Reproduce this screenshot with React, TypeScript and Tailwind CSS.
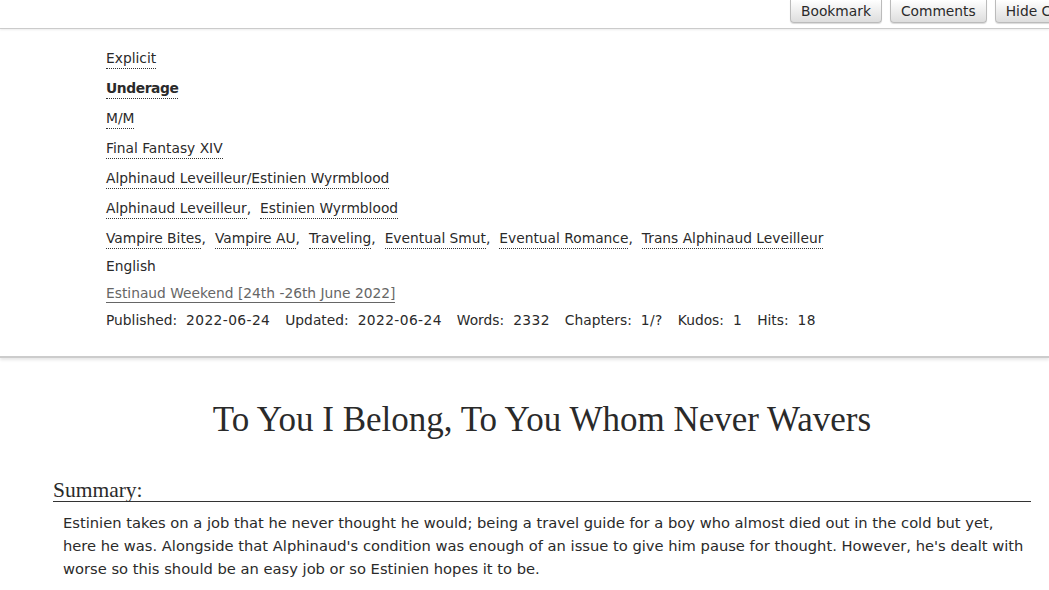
const sans = "font-['Lucida_Grande','DejaVu_Sans',Verdana,sans-serif]";

function Tag({ children, bold }: { children: React.ReactNode; bold?: boolean }) {
  return (
    <span className={`border-b border-dotted border-[#333] pb-[2px] text-[#2a2a2a] ${bold ? 'font-bold tracking-[-0.4px]' : ''}`}>
      {children}
    </span>
  );
}

function TagList({ tags }: { tags: string[] }) {
  return (
    <div className="flex flex-wrap">
      {tags.map((t, i) => (
        <span key={t} className="mr-[9px]">
          <Tag>{t}</Tag>
          {i < tags.length - 1 ? ',' : ''}
        </span>
      ))}
    </div>
  );
}

function Btn({ label }: { label: string }) {
  return (
    <button className="shrink-0 h-[23px] px-[10px] rounded-b-[4px] border border-t-0 border-[#bbb] bg-gradient-to-b from-[#fff] to-[#ddd] text-[#2a2a2a] text-[13.8px] leading-[18px] shadow-[0_1px_1px_rgba(0,0,0,0.15)] whitespace-nowrap">
      {label}
    </button>
  );
}

const stats: [string, string][] = [
  ['Published:', '2022-06-24'],
  ['Updated:', '2022-06-24'],
  ['Words:', '2332'],
  ['Chapters:', '1/?'],
  ['Kudos:', '1'],
  ['Hits:', '18'],
];

export default function App() {
  return (
    <div className={`w-[1049px] h-[590px] overflow-hidden bg-white ${sans} text-[13.8px] text-[#2a2a2a]`}>
      <div className="h-[29px] border-b border-[#ccc] shadow-[0_1px_2px_rgba(0,0,0,0.08)] flex justify-start gap-[8px] pl-[790px] overflow-hidden">
        <Btn label="Bookmark" />
        <Btn label="Comments" />
        <Btn label="Hide Creator's Style" />
      </div>

      <div className="pl-[106px] pt-[20px] h-[329px] border-b-2 border-[#ccc] shadow-[0_2px_3px_rgba(0,0,0,0.1)]">
        <div className="flex flex-col leading-[18px]">
          <div className="h-[30px]"><Tag>Explicit</Tag></div>
          <div className="h-[30px]"><Tag bold>Underage</Tag></div>
          <div className="h-[30px]"><Tag>M/M</Tag></div>
          <div className="h-[30px]"><Tag>Final Fantasy XIV</Tag></div>
          <div className="h-[30px]"><Tag>Alphinaud Leveilleur/Estinien Wyrmblood</Tag></div>
          <div className="h-[30px]"><TagList tags={['Alphinaud Leveilleur', 'Estinien Wyrmblood']} /></div>
          <div className="h-[28px]">
            <TagList
              tags={['Vampire Bites', 'Vampire AU', 'Traveling', 'Eventual Smut', 'Eventual Romance', 'Trans Alphinaud Leveilleur']}
            />
          </div>
          <div className="h-[27px]">English</div>
          <div className="h-[27px]">
            <span className="border-b border-[#666] pb-[1px] text-[#666]">Estinaud Weekend [24th -26th June 2022]</span>
          </div>
          <div className="flex gap-[15px]">
            {stats.map(([k, v]) => (
              <span key={k} className="flex gap-[9px]">
                <span>{k}</span>
                <span className="tracking-[0.4px]">{v}</span>
              </span>
            ))}
          </div>
        </div>
      </div>

      <div className="ml-[53px] mr-[18px]">
        <h2 className="mt-[42px] text-center font-['Georgia','Liberation_Serif',serif] text-[35px] leading-[40px] text-[#2a2a2a]">
          To You I Belong, To You Whom Never Wavers
        </h2>

        <h3 className="mt-[39px] font-['Georgia','Liberation_Serif',serif] text-[21.5px] leading-[22px] text-[#2a2a2a] border-b border-[#333]">
          Summary:
        </h3>
        <p className="mt-[9px] pl-[10px] leading-[23px] text-[14.7px]">
          Estinien takes on a job that he never thought he would; being a travel guide for a boy who almost died out in the cold but yet,
          here he was. Alongside that Alphinaud's condition was enough of an issue to give him pause for thought. However, he's dealt with
          worse so this should be an easy job or so Estinien hopes it to be.
        </p>
      </div>
    </div>
  );
}
